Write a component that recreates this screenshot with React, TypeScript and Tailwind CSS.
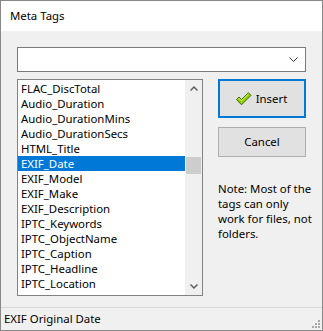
import React from "react";

const items = [
  "FLAC_DiscTotal",
  "Audio_Duration",
  "Audio_DurationMins",
  "Audio_DurationSecs",
  "HTML_Title",
  "EXIF_Date",
  "EXIF_Model",
  "EXIF_Make",
  "EXIF_Description",
  "IPTC_Keywords",
  "IPTC_ObjectName",
  "IPTC_Caption",
  "IPTC_Headline",
  "IPTC_Location",
];

const Check = () => (
  <svg width="17" height="14" viewBox="0 0 17 14">
    <path
      d="M1.5 7.5 L4 5 L6.5 7.5 L13.5 0.8 L16 3.3 L6.5 12.8 Z"
      fill="#8cd000"
      stroke="#3f6b00"
      strokeWidth="1"
      strokeLinejoin="round"
    />
    <path d="M3 7.3 L4 6.3 L6.5 8.8 L13.5 2" fill="none" stroke="#d8f58a" strokeWidth="1" />
  </svg>
);

const App = () => {
  return (
    <div
      className="w-[323px] h-[331px] border border-[#888888] bg-[#f0f0f0] flex flex-col text-[11.4px] text-black overflow-hidden"
      style={{ fontFamily: '"Noto Sans", "Open Sans", sans-serif' }}
    >
      <div className="h-[30px] bg-white flex items-center pl-[9px] text-[11.4px] shrink-0">Meta Tags</div>
      <div className="flex-1 px-[16px] pt-[16px] flex flex-col">
        <div className="h-[25px] w-[289px] bg-white border border-[#7a7a7a] flex items-center justify-end pr-[7px]">
          <svg width="9" height="6" viewBox="0 0 9 6">
            <path d="M0.5 0.5 L4.5 4.5 L8.5 0.5" fill="none" stroke="#333" strokeWidth="1" />
          </svg>
        </div>
        <div className="flex mt-[7px] gap-[15px]">
          <div className="w-[186px] h-[217px] bg-white border border-[#828282] flex">
            <div className="flex-1 flex flex-col pt-[1px]">
              {items.map((t) => (
                <div
                  key={t}
                  className={
                    "h-[15px] leading-[15px] pl-[3px] whitespace-nowrap " +
                    (t === "EXIF_Date" ? "bg-[#0078d7] text-white" : "")
                  }
                >
                  {t}
                </div>
              ))}
            </div>
            <div className="w-[17px] bg-[#f0f0f0] flex flex-col items-center">
              <div className="h-[17px] flex items-center justify-center">
                <svg width="8" height="5" viewBox="0 0 8 5">
                  <path d="M0.5 4.5 L4 1 L7.5 4.5" fill="none" stroke="#606060" strokeWidth="1.5" />
                </svg>
              </div>
              <div className="mt-[60px] w-[15px] h-[17px] bg-[#cdcdcd]" />
              <div className="flex-1" />
              <div className="h-[17px] flex items-center justify-center">
                <svg width="8" height="5" viewBox="0 0 8 5">
                  <path d="M0.5 0.5 L4 4 L7.5 0.5" fill="none" stroke="#606060" strokeWidth="1.5" />
                </svg>
              </div>
            </div>
          </div>
          <div className="flex flex-col w-[88px]">
            <button className="h-[39px] border-2 border-[#0078d7] bg-[#e1e1e1] flex items-center justify-center gap-[4px] pr-[2px]">
              <Check />
              <span>Insert</span>
            </button>
            <button className="mt-[9px] h-[30px] border border-[#adadad] bg-[#e1e1e1] flex items-center justify-center">
              Cancel
            </button>
            <p className="mt-[24px] leading-[15px] w-[100px]">
              Note: Most of the tags can only work for files, not folders.
            </p>
          </div>
        </div>
      </div>
      <div className="h-[23px] border-t border-[#d7d7d7] flex items-center pl-[3px] relative shrink-0">
        EXIF Original Date
        <svg className="absolute right-[2px] bottom-[2px]" width="8" height="8" viewBox="0 0 8 8">
          <rect x="6" y="0" width="2" height="2" fill="#a8a8a8" />
          <rect x="3" y="3" width="2" height="2" fill="#a8a8a8" />
          <rect x="6" y="3" width="2" height="2" fill="#a8a8a8" />
          <rect x="0" y="6" width="2" height="2" fill="#a8a8a8" />
          <rect x="3" y="6" width="2" height="2" fill="#a8a8a8" />
          <rect x="6" y="6" width="2" height="2" fill="#a8a8a8" />
        </svg>
      </div>
    </div>
  );
};

export default App;
